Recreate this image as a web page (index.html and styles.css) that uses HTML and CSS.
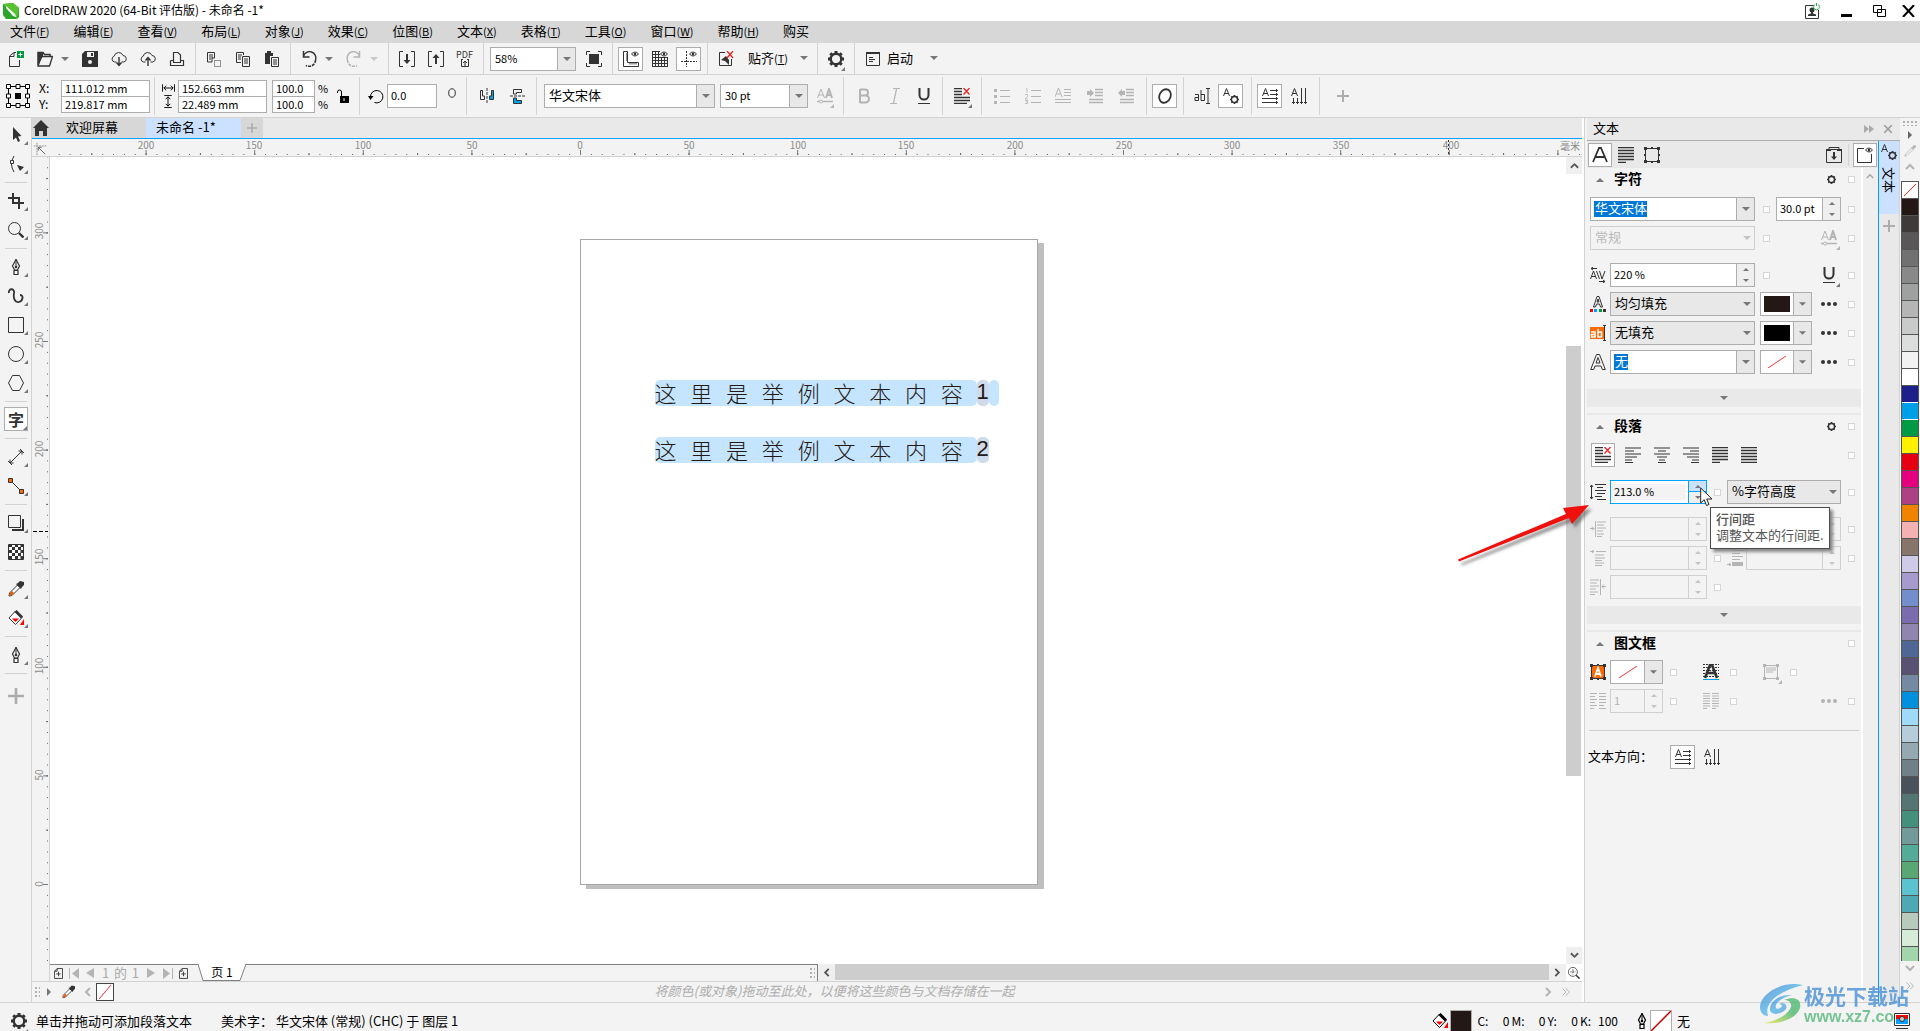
FILE: index.html
```html
<!DOCTYPE html>
<html lang="zh-CN">
<head>
<meta charset="utf-8">
<title>CorelDRAW 2020 (64-Bit 评估版) - 未命名 -1*</title>
<link rel="stylesheet" href="styles.css">
</head>
<body>
<svg class="defs" aria-hidden="true">
  <symbol id="i-down" viewBox="0 0 8 4"><path d="M0 0h8L4 4z" fill="currentColor"/></symbol>
  <symbol id="i-up" viewBox="0 0 8 4"><path d="M0 4h8L4 0z" fill="currentColor"/></symbol>
  <symbol id="i-gear" viewBox="0 0 16 16"><circle cx="8" cy="8" r="5.300" fill="none" stroke="currentColor" stroke-width="2.400"/><path d="M8 0v3M8 13v3M0 8h3M13 8h3M2.300 2.300l2 2M11.700 11.700l2 2M13.700 2.300l-2 2M4.300 11.700l-2 2" stroke="currentColor" stroke-width="3"/></symbol>
  <symbol id="i-new" viewBox="0 0 16 16"><path d="M8 1.500H6L1.500 5v10.500h10V9" fill="none" stroke="currentColor"/><path d="M6 2v3.500H2" fill="none" stroke="currentColor"/><path d="M9 0h7v7H9z" fill="#009a3d"/><path d="M12.500 1.500v4M10.500 3.500h4" stroke="#fff"/></symbol>
  <symbol id="i-open" viewBox="0 0 16 16"><path d="M1 14V1.500h5l1.500 2H13V6" fill="none" stroke="currentColor" stroke-width="1.500"/><path d="M1 15L4 5.500h11.500L12.500 15z" fill="none" stroke="currentColor" stroke-width="1.300"/><path d="M1 2h5v3l-4 8H1z" fill="currentColor"/></symbol>
  <symbol id="i-save" viewBox="0 0 16 16"><path d="M3 0h13v16H0V3z" fill="currentColor"/><path d="M5 1h7v5H5z" fill="#f3f3f3"/><path d="M9 2h2v3H9z" fill="currentColor"/><circle cx="8" cy="11" r="2" fill="#f3f3f3"/></symbol>
  <symbol id="i-clouddn" viewBox="0 0 16 16"><path d="M5.500 11H3.500a3 3 0 0 1-.3-5.800A4.600 4.600 0 0 1 12 4.500a3.300 3.300 0 0 1 .8 6.500h-2.300" fill="none" stroke="currentColor"/><path d="M8 6v8M5.500 11.500L8 14.500l2.500-3" fill="none" stroke="currentColor" stroke-width="1.400"/></symbol>
  <symbol id="i-cloudup" viewBox="0 0 16 16"><path d="M5.500 11H3.500a3 3 0 0 1-.3-5.800A4.600 4.600 0 0 1 12 4.500a3.300 3.300 0 0 1 .8 6.500h-2.300" fill="none" stroke="currentColor"/><path d="M8 15V7M5.500 9.500L8 6.500l2.500 3" fill="none" stroke="currentColor" stroke-width="1.400"/></symbol>
  <symbol id="i-print" viewBox="0 0 16 16"><path d="M4.500 11V1.500H9L11.500 4v7M1.500 9.500v5h13v-5h-3" fill="none" stroke="currentColor" stroke-width="1.200"/><path d="M4.500 9.500h-3M4 11.500h8" stroke="currentColor"/></symbol>
  <symbol id="i-cut" viewBox="0 0 16 16"><path d="M1.500 11V1.500h7V7H6v4z" fill="none" stroke="currentColor"/><path d="M3 4h4M3 6h4M3 8h2" stroke="currentColor"/><path d="M8.500 9.500h6v6h-6z" fill="none" stroke="currentColor" stroke-dasharray="1 1"/></symbol>
  <symbol id="i-copy" viewBox="0 0 16 16"><path d="M6 11.500H1.500v-10h7V4M7.500 5.500h7v10h-7z" fill="none" stroke="currentColor"/><path d="M3 4h4M3 6h3M3 8h3M9 8h4M9 10h4M9 12h4" stroke="currentColor"/></symbol>
  <symbol id="i-paste" viewBox="0 0 16 16"><path d="M1 2h2V0h4v2h2v3H6v8H1z" fill="currentColor"/><path d="M7.500 6.500h7v9h-7z" fill="none" stroke="currentColor"/><path d="M9 9h4M9 11h4M9 13h4" stroke="currentColor"/></symbol>
  <symbol id="i-undo" viewBox="0 0 16 16"><path d="M2.500 5A6.300 6.300 0 0 1 14.500 9" fill="none" stroke="currentColor" stroke-width="1.400"/><path d="M14.500 9A6.300 6.300 0 0 1 5 14.500" fill="none" stroke="currentColor" stroke-width="1.600" stroke-dasharray="3 1"/><path d="M2.500 0v6h6" fill="none" stroke="currentColor" stroke-width="1.500"/></symbol>
  <symbol id="i-redo" viewBox="0 0 16 16"><path d="M13.500 5A6.300 6.300 0 0 0 1.500 9" fill="none" stroke="currentColor" stroke-width="1.400"/><path d="M1.500 9A6.300 6.300 0 0 0 11 14.500" fill="none" stroke="currentColor" stroke-width="1.600" stroke-dasharray="3 1"/><path d="M13.500 0v6h-6" fill="none" stroke="currentColor" stroke-width="1.500"/></symbol>
  <symbol id="i-import" viewBox="0 0 16 16"><path d="M4 .5H.5v15H4M12 .5h3.500v15H12" fill="none" stroke="currentColor"/><path d="M8 3v9" stroke="currentColor" stroke-width="2"/><path d="M4.500 9h7L8 13z" fill="currentColor"/></symbol>
  <symbol id="i-export" viewBox="0 0 16 16"><path d="M4 .5H.5v15H4M12 .5h3.500v15H12" fill="none" stroke="currentColor"/><path d="M8 4v9" stroke="currentColor" stroke-width="2"/><path d="M4.500 7h7L8 3z" fill="currentColor"/></symbol>
  <symbol id="i-page-up" viewBox="0 0 8 8"><path d="M0 .5h2M6 .5h2M.5 0v7.500h7V0" fill="none" stroke="currentColor"/><path d="M4 2v5M2 4l2-2 2 2" fill="none" stroke="currentColor"/></symbol>
  <symbol id="i-full" viewBox="0 0 16 16"><path d="M3 3h10v10H3z" fill="currentColor"/><path d="M.5 4V.5H4M12 .5h3.500V4M15.500 12v3.500H12M4 15.500H.5V12" fill="none" stroke="currentColor"/></symbol>
  <symbol id="i-eye" viewBox="0 0 8 6"><path d="M.5 3Q4-1 7.500 3 4 7 .5 3z" fill="#fff" stroke="currentColor"/><circle cx="4" cy="3" r="1.300" fill="currentColor"/></symbol>
  <symbol id="i-rulers" viewBox="0 0 16 16"><path d="M.5.500h4v11h11v4H.5z" fill="none" stroke="currentColor"/><path d="M3 3h1M3 5h1M3 7h1M3 9h1M7 12v1.500M9 12v1.500M11 12v1.500M13 12v1.500" stroke="currentColor"/><use href="#i-eye" x="8" y="0" width="8" height="6"/></symbol>
  <symbol id="i-grid" viewBox="0 0 16 16"><path d="M0 .5h8M0 3.500h8M0 6.500h16M0 9.500h16M0 12.500h16M0 15.500h16M.5 0v16M3.500 0v16M6.500 0v16M9.500 7v9M12.500 7v9M15.500 7v9" stroke="currentColor" fill="none"/><use href="#i-eye" x="8" y="0" width="8" height="6"/></symbol>
  <symbol id="i-guides" viewBox="0 0 16 16"><path d="M5.500 0v16M0 10.500h16" stroke="currentColor" stroke-dasharray="2 1"/><use href="#i-eye" x="8" y="0" width="8" height="6"/></symbol>
  <symbol id="i-snap" viewBox="0 0 16 16"><path d="M7 1.500H1.500v13h12V8" fill="none" stroke="currentColor"/><path d="M8 5L3 9l4 1 4 4V9" fill="currentColor"/><path d="M9 0l6 7M15 0L9 7" stroke="#f02020" stroke-width="1.300"/></symbol>
  <symbol id="i-launch" viewBox="0 0 16 16"><path d="M1.500 1.500h13v13h-13z" fill="none" stroke="currentColor"/><path d="M1 2h14" stroke="currentColor" stroke-width="2"/><path d="M4 6.500h4M4 8.500h6M4 10.500h4" stroke="currentColor"/></symbol>
  <symbol id="i-anchor" viewBox="0 0 24 24"><path d="M2.500 2.500h19v19h-19z" fill="none" stroke="#000"/><g fill="#fff" stroke="#000"><path d="M.5.500h4v4h-4zM10 .5h4v4h-4zM19.500.500h4v4h-4zM.5 10h4v4h-4zM19.500 10h4v4h-4zM.5 19.500h4v4h-4zM10 19.500h4v4h-4zM19.500 19.500h4v4h-4z"/></g><path d="M9 9h6v6H9z" fill="#000"/></symbol>
  <symbol id="i-width" viewBox="0 0 14 8"><path d="M.5 0v8M13.500 0v8M2 4h10M4.500 1.500L2 4l2.500 2.500M9.500 1.500L12 4 9.500 6.500" fill="none" stroke="currentColor"/></symbol>
  <symbol id="i-height" viewBox="0 0 8 14"><path d="M0 .5h8M0 13.500h8M4 2v10M1.500 4.500L4 2l2.500 2.500M1.500 9.500L4 12l2.500-2.500" fill="none" stroke="currentColor"/></symbol>
  <symbol id="i-lock" viewBox="0 0 12 14"><path d="M3 14H12V7H3z" fill="#000"/><path d="M4.500 7V3a2 2 0 0 0-4 0v1" fill="none" stroke="#000"/><path d="M7 9v3" stroke="#fff"/></symbol>
  <symbol id="i-rotate" viewBox="0 0 16 16"><path d="M2.500 9A6.200 6.200 0 1 1 6.500 14.500" fill="none" stroke="currentColor"/><path d="M0 8h5.500L2.500 12z" fill="currentColor"/></symbol>
  <symbol id="i-mirh" viewBox="0 0 16 16"><path d="M1.500 2.500v9h4V8h-2V2.500z" fill="none" stroke="currentColor"/><path d="M14.500 2.500v9h-4V8h2V2.500z" fill="#00a0e9" stroke="#333"/><path d="M8 0v16" stroke="currentColor" stroke-dasharray="3 1"/></symbol>
  <symbol id="i-mirv" viewBox="0 0 16 16"><path d="M3.500 6V1.500h8v3h-5V6z" fill="none" stroke="currentColor"/><path d="M3.500 10v5.500h8v-3h-5V10z" fill="#00a0e9" stroke="#333"/><path d="M0 8h16" stroke="currentColor" stroke-dasharray="3 1"/></symbol>
  <symbol id="i-noalign" viewBox="0 0 16 16"><path d="M0 .5h8M0 3.500h8M0 6.500h8M0 9.500h16M0 12.500h16M0 15.500h13" stroke="currentColor" stroke-width="1.400"/><path d="M9.500 0l6 6.500M15.500 0l-6 6.500" stroke="#f02020" stroke-width="1.300"/></symbol>
  <symbol id="i-left" viewBox="0 0 16 16"><path d="M0 1h16M0 4h9M0 7h16M0 10h12M0 13h7M0 15.500h8" stroke="currentColor" stroke-width="1.200"/></symbol>
  <symbol id="i-center" viewBox="0 0 16 16"><path d="M0 1h16M4 4h8M0 7h16M3 10h10M5 13h6M4 15.500h8" stroke="currentColor" stroke-width="1.200"/></symbol>
  <symbol id="i-right" viewBox="0 0 16 16"><path d="M0 1h16M7 4h9M0 7h16M4 10h12M9 13h7M8 15.500h8" stroke="currentColor" stroke-width="1.200"/></symbol>
  <symbol id="i-just" viewBox="0 0 16 16"><path d="M0 .5h16M0 3.500h16M0 6.500h16M0 9.500h16M0 12.500h16M0 15.500h8" stroke="currentColor" stroke-width="1.300"/></symbol>
  <symbol id="i-full-just" viewBox="0 0 16 16"><path d="M0 .5h16M0 3.500h16M0 6.500h16M0 9.500h16M0 12.500h16M0 15.500h16" stroke="currentColor" stroke-width="1.300"/></symbol>
  <symbol id="i-bullets" viewBox="0 0 16 16"><path d="M0 1h3v3H0zM0 7h3v3H0zM0 13h3v3H0z" fill="currentColor"/><path d="M6 2.500h10M6 8.500h10M6 14.500h10" stroke="currentColor"/></symbol>
  <symbol id="i-numbers" viewBox="0 0 16 16"><path d="M1 1l1-.5V5M0 6.500h2.500v2L0 11h3M0 12.500h2.500v3H0M1 14h1" stroke="currentColor" fill="none" stroke-width=".8"/><path d="M6 2.500h10M6 8.500h10M6 14.500h10" stroke="currentColor"/></symbol>
  <symbol id="i-dropcap" viewBox="0 0 16 16"><path d="M0 9L3.500 0 7 9M1.500 6h4M9 1.500h7M9 4.500h7M9 7.500h7M0 11.500h16M0 14.500h16" fill="none" stroke="currentColor"/></symbol>
  <symbol id="i-outdent" viewBox="0 0 16 16"><path d="M8 1.500h8M8 4.500h8M8 7.500h8M2 11.500h14M2 14.500h14" stroke="currentColor" stroke-width="1.300"/><path d="M0 3h3V1l4 4-4 4V7H0z" fill="currentColor"/></symbol>
  <symbol id="i-indent" viewBox="0 0 16 16"><path d="M8 1.500h8M8 4.500h8M8 7.500h8M2 11.500h14M2 14.500h14" stroke="currentColor" stroke-width="1.300"/><path d="M7 3H4V1L0 5l4 4V7h3z" fill="currentColor"/></symbol>
  <symbol id="i-aa" viewBox="0 0 16 16"><path d="M.5 10L4 1l3.500 9M2 7h4" fill="none" stroke="currentColor"/><path d="M9 10l3-9 3 9M10 7h4" fill="none" stroke="currentColor" stroke-width="2"/><path d="M0 13.500h16" stroke="currentColor" stroke-width="1.500"/><circle cx="4" cy="13.500" r="1.500" fill="#f3f3f3" stroke="currentColor"/></symbol>
  <symbol id="i-bold" viewBox="0 0 16 16"><path d="M4 1v14M4 1.500h5a3 3 0 0 1 0 6H4M4 7.500h5.500a3.500 3.500 0 0 1 0 7H4" fill="none" stroke="currentColor" stroke-width="2"/></symbol>
  <symbol id="i-italic" viewBox="0 0 16 16"><path d="M6 .5h7M3 15.500h7M9.500 1l-3 14" fill="none" stroke="currentColor" stroke-width="1.200"/></symbol>
  <symbol id="i-under" viewBox="0 0 16 16"><path d="M3.500 0v7a4.500 4.500 0 0 0 9 0V0" fill="none" stroke="currentColor" stroke-width="2"/><path d="M2 15.500h12" stroke="currentColor"/></symbol>
  <symbol id="i-opentype" viewBox="0 0 16 16"><ellipse cx="8" cy="8" rx="5.500" ry="7" transform="rotate(25 8 8)" fill="none" stroke="currentColor" stroke-width="1.800"/></symbol>
  <symbol id="i-ab" viewBox="0 0 16 16"><path d="M1 6.500h3.500v6H1v-3h3.500M7 2v10.500h3.500v-6H7" fill="none" stroke="currentColor"/><path d="M12 .5h4M12 15.500h4M14 1v14" stroke="currentColor"/></symbol>
  <symbol id="i-agear" viewBox="0 0 16 16"><path d="M.5 8L3.500.500 6.500 8M1.500 5.500h4" fill="none" stroke="currentColor"/><use href="#i-gear" x="7" y="7" width="9" height="9"/></symbol>
  <symbol id="i-horz" viewBox="0 0 16 16"><path d="M.5 8L3.500.500 6.500 8M1.500 5.500h4" fill="none" stroke="currentColor"/><path d="M8 2.500h8M8 6.500h8M0 10.500h16M0 14.500h16M14.500 1v3M14.500 5v3M14.500 9v3M14.500 13v3" stroke="currentColor"/></symbol>
  <symbol id="i-vert" viewBox="0 0 16 16"><path d="M.5 8L3.500.500 6.500 8M1.500 5.500h4" fill="none" stroke="currentColor"/><path d="M2.500 10v6M6.500 10v6M10.500 0v16M14.500 0v16M1 14.500h3M5 14.500h3M9 14.500h3M13 14.500h3" stroke="currentColor"/></symbol>
  <symbol id="i-home" viewBox="0 0 16 16"><path d="M8 0L0 8h2v8h4v-5h4v5h4V8h2z" fill="currentColor"/></symbol>
  <symbol id="i-plus" viewBox="0 0 12 12"><path d="M6 0v12M0 6h12" stroke="currentColor" stroke-width="2"/></symbol>
  <symbol id="i-pick" viewBox="0 0 16 16"><path d="M5 0v13l3-2.500L10 15l2-1-2-4.500 3.500-.5z" fill="currentColor"/></symbol>
  <symbol id="i-shape" viewBox="0 0 16 16"><path d="M6 0Q1 8 6 16" fill="none" stroke="currentColor"/><path d="M2.500 4.500h3v3h-3z" fill="#fff" stroke="currentColor"/><path d="M9 9l7 2-4 4z" fill="currentColor"/></symbol>
  <symbol id="i-crop" viewBox="0 0 16 16"><path d="M0 5h11v11M5 0v10h11" fill="none" stroke="currentColor" stroke-width="2"/></symbol>
  <symbol id="i-zoom" viewBox="0 0 16 16"><circle cx="6.500" cy="6.500" r="6" fill="none" stroke="currentColor"/><path d="M11 11l4.500 4.500" stroke="currentColor" stroke-width="2.400"/></symbol>
  <symbol id="i-pen" viewBox="0 0 16 16"><path d="M8 .5L4.500 7l2 4h3l2-4zM6 11.500h4v4H6z" fill="none" stroke="currentColor" stroke-width="1.200"/><path d="M8 0v9" stroke="currentColor"/><circle cx="8" cy="8" r="1.300" fill="currentColor"/></symbol>
  <symbol id="i-curve" viewBox="0 0 16 16"><path d="M1 5C0 0 7 0 6 5 5 10 7 15 11 14c4-1 5-7 1-7" fill="none" stroke="currentColor" stroke-width="1.800"/></symbol>
  <symbol id="i-rect" viewBox="0 0 16 16"><path d="M.5.500h15v15H.5z" fill="none" stroke="currentColor"/></symbol>
  <symbol id="i-ellipse" viewBox="0 0 16 16"><circle cx="8" cy="8" r="7.500" fill="none" stroke="currentColor"/></symbol>
  <symbol id="i-poly" viewBox="0 0 16 16"><path d="M4.500.500h7l4 7.500-4 7.500h-7L.5 8z" fill="none" stroke="currentColor"/></symbol>
  <symbol id="i-dim" viewBox="0 0 16 16"><path d="M2 14L14 2M0 12l4 4M12 0l4 4M2 10.500V14h3.500M10.500 2H14v3.500" fill="none" stroke="currentColor"/></symbol>
  <symbol id="i-conn" viewBox="0 0 16 16"><path d="M4 4l8 8" stroke="currentColor"/><path d="M.5.500h4v4h-4zM11.500 11.500h4v4h-4z" fill="#ff6a00" stroke="currentColor"/></symbol>
  <symbol id="i-shadow" viewBox="0 0 16 16"><path d="M.5.500h12v12H.5z" fill="none" stroke="currentColor"/><path d="M15 4v11H4" fill="none" stroke="currentColor" stroke-width="2"/></symbol>
  <symbol id="i-check" viewBox="0 0 16 16"><path d="M.5.500h15v15H.5z" fill="#fff" stroke="currentColor"/><path d="M2.500 0v16M8.500 0v16M14 0v16" stroke="currentColor" stroke-width="3" stroke-dasharray="3 3"/><path d="M5.500 0v16M11.500 0v16" stroke="currentColor" stroke-width="3" stroke-dasharray="3 3" stroke-dashoffset="3"/></symbol>
  <symbol id="i-drop" viewBox="0 0 16 16"><path d="M9.500 4L1.500 12l-.5 3 3-.5 8-8z" fill="#fff" stroke="currentColor"/><path d="M1 15l1-3 2-2 2 2-2 2z" fill="#e86000"/><path d="M8 3l2-1 2-2 4 1v3l-2 2-1 2z" fill="currentColor"/></symbol>
  <symbol id="i-bucket" viewBox="0 0 16 16"><path d="M7.500 1L14 7.500 7.500 14.500 1 8z" fill="#fff" stroke="currentColor"/><path d="M7.500 1L14 7.500" stroke="currentColor" stroke-width="3"/><path d="M4 8.500h7L7.500 12z" fill="#f00"/><path d="M16 9v6h-4z" fill="#f00"/></symbol>
  <symbol id="i-corner" viewBox="0 0 16 16"><path d="M4.500 1v15M1 4.500h15" stroke="#888" stroke-dasharray="2 1"/><path d="M6 6l8 8M6 10V6h4" fill="none" stroke="#555"/></symbol>
  <symbol id="i-frame" viewBox="0 0 16 16"><path d="M1.500 1.500h13v13h-13z" fill="none" stroke="currentColor"/><path d="M0 0h3v3H0zM13 0h3v3h-3zM0 13h3v3H0zM13 13h3v3h-3zM7 0h2v2H7zM7 14h2v2H7zM0 7h2v2H0zM14 7h2v2h-2z" fill="currentColor"/></symbol>
  <symbol id="i-kern" viewBox="0 0 16 16"><path d="M.5 12L3.500 4l3 8M1.500 9.500h4M6.500 4l3 8M9.500 4l2.500 8 3-8" fill="none" stroke="currentColor"/><path d="M1 1.500h6M3 0L1 1.500 3 3M9 14.500h6M13 13l2 1.500-2 1.500" fill="none" stroke="currentColor"/></symbol>
  <symbol id="i-fillA" viewBox="0 0 16 16"><path d="M3.500 11L7 .5h2L12.500 11h-2L9.500 8h-3L5.500 11zM7 6h2L8 3z" fill="none" stroke="currentColor"/><path d="M0 13h3v3H0z" fill="#f00"/><path d="M4 13h3v3H4z" fill="#00a0ff"/><path d="M9 13h3v3H9z" fill="#009a3d"/><path d="M13 13h3v3h-3z" fill="#333"/></symbol>
  <symbol id="i-bgfill" viewBox="0 0 16 16"><path d="M0 2h14v12H0z" fill="#ff6a00"/><path d="M1 7h4v5H1.500V9.500H5M8 4v8h3.500V7H8" fill="none" stroke="#fff" stroke-width="1.500"/><path d="M14.500 0v16M13 .5h3M13 15.500h3" stroke="#333"/></symbol>
  <symbol id="i-outA" viewBox="0 0 16 16"><path d="M.7 15.500L6.500.500h3l5.800 15h-3L11 12H5l-1.300 3.500zM6 9h4L8 3.500z" fill="none" stroke="currentColor"/></symbol>
  <symbol id="i-line" viewBox="0 0 16 16"><path d="M1.500 1v14M0 3l1.500-2L3 3M0 13l1.500 2L3 13M5 .5h11M7 3.500h6M5 6.500h11M7 9.500h8M5 12.500h7M7 15.500h9" fill="none" stroke="currentColor"/></symbol>
  <symbol id="i-lind" viewBox="0 0 16 16"><path d="M5.500 0v16M0 7.500h4M2 5.500l2 2-2 2M7 1h9M7 4h7M7 7h9M7 10h6M7 13h7M7 15.500h5" fill="none" stroke="currentColor"/></symbol>
  <symbol id="i-find" viewBox="0 0 16 16"><path d="M0 1.500h4M2 0l2 1.500L2 3M6 1.500h10M5 5h9M5 8h10M5 10.500h7M5 13h9M5 15.500h7" fill="none" stroke="currentColor"/></symbol>
  <symbol id="i-rind" viewBox="0 0 16 16"><path d="M10.500 0v16M16 7.500h-4M14 5.500l-2 2 2 2M0 1h9M0 4h7M0 7h9M0 10h6M0 13h8M0 15.500h5" fill="none" stroke="currentColor"/></symbol>
  <symbol id="i-after" viewBox="0 0 16 16"><path d="M5 .5h11M5 3.500h8M5 6.500h11M5 9.500h8M0 14.500h4M2 13l2 1.500L2 16" fill="none" stroke="currentColor"/><path d="M5 12h11v4H5z" fill="currentColor"/></symbol>
  <symbol id="i-frameA" viewBox="0 0 16 16"><path d="M1.500 1.500h13v13h-13z" fill="#ff6a00" stroke="#333"/><path d="M0 0h3v3H0zM13 0h3v3h-3zM0 13h3v3H0zM13 13h3v3h-3zM7 0h2v2H7zM7 14h2v2H7z" fill="#333"/><path d="M5 12.500L8 4l3 8.500M6 10h4" fill="none" stroke="#fff" stroke-width="1.800"/></symbol>
  <symbol id="i-base" viewBox="0 0 16 16"><path d="M0 .5h16M0 3.500h16M0 6.500h16M0 9.500h16M0 12.500h16" stroke="currentColor" stroke-dasharray="2 1"/><path d="M2 14L7 1h2l5 13M5 9h6" fill="none" stroke="#333" stroke-width="2.600"/><path d="M0 15.500h16" stroke="#00a0e9"/></symbol>
  <symbol id="i-valign" viewBox="0 0 16 16"><path d="M1.500 1.500h13v13h-13zM3 4h10M3 6h10M3 8h7" fill="none" stroke="currentColor"/><path d="M0 0h3v3H0zM13 0h3v3h-3zM0 13h3v3H0zM13 13h3v3h-3z" fill="currentColor"/></symbol>
  <symbol id="i-cols" viewBox="0 0 16 16"><path d="M0 .5h7M0 3.500h5M0 6.500h7M0 9.500h5M0 12.500h7M0 15.500h4M9 .5h7M9 3.500h7M9 6.500h7M9 9.500h7M9 12.500h5M9 15.500h7" stroke="currentColor"/></symbol>
  <symbol id="i-cols2" viewBox="0 0 16 16"><path d="M0 .5h7M0 3h7M0 5.500h7M0 8h7M0 10.500h7M0 13h7M0 15.500h4M9 .5h7M9 3h7M9 5.500h7M9 8h7M9 10.500h7M9 13h7M9 15.500h4" stroke="currentColor"/></symbol>
  <symbol id="i-dots" viewBox="0 0 16 4"><circle cx="2" cy="2" r="2" fill="currentColor"/><circle cx="8" cy="2" r="2" fill="currentColor"/><circle cx="14" cy="2" r="2" fill="currentColor"/></symbol>
  <symbol id="i-none" viewBox="0 0 18 12"><path d="M0 12L18 0" stroke="#f03030"/></symbol>
  <symbol id="i-addpage" viewBox="0 0 10 12"><path d="M3.500.500h6v11h-9v-8zM5 4v5M2.500 6.500h5M3.500.500v3h-3" fill="none" stroke="currentColor"/></symbol>
  <symbol id="i-chev-up" viewBox="0 0 10 7"><path d="M1 6l4-4 4 4" fill="none" stroke="currentColor" stroke-width="2"/></symbol>
  <symbol id="i-chev-dn" viewBox="0 0 10 7"><path d="M1 1l4 4 4-4" fill="none" stroke="currentColor" stroke-width="2"/></symbol>
  <symbol id="i-chev-l" viewBox="0 0 7 10"><path d="M6 1L2 5l4 4" fill="none" stroke="currentColor" stroke-width="2"/></symbol>
  <symbol id="i-chev-r" viewBox="0 0 7 10"><path d="M1 1l4 4-4 4" fill="none" stroke="currentColor" stroke-width="2"/></symbol>
  <symbol id="i-dbl" viewBox="0 0 8 8"><path d="M.5.500L4 4 .5 7.500M4 .5L7.500 4 4 7.500" fill="none" stroke="currentColor"/></symbol>
  <symbol id="i-tri-r" viewBox="0 0 4 8"><path d="M0 0l4 4-4 4z" fill="currentColor"/></symbol>
</svg>

<header class="titlebar">
  <svg class="logo" viewBox="0 0 16 16"><path d="M0 1l10-1 6 5v9l-2 2H3l-3-4z" fill="#2aa52a"/><path d="M0 1l10-1 6 5-2 11z" fill="#57c22f"/><path d="M3 3l9 8 1 3-3-1L3 5z" fill="#fff"/></svg>
  <h1>CorelDRAW 2020 (64-Bit 评估版) - 未命名 -1*</h1>
  <div class="winbtns">
    <button aria-label="账户"><svg width="15" height="16" viewBox="0 0 15 16"><path d="M9 2.500H.5v13h13V7" fill="none" stroke="#333"/><circle cx="7" cy="7" r="2.500" fill="#333"/><path d="M3 13v-1.500l3-1V9h2v1.500l3 1V13z" fill="#333"/><path d="M9.500 1.500a3 3 0 1 0 4 0M11.500 0v3" fill="none" stroke="#2bb24c"/></svg></button>
    <button aria-label="最小化"><svg width="11" height="12" viewBox="0 0 11 12"><path d="M0 10.500h11" stroke="#000" stroke-width="3"/></svg></button>
    <button aria-label="还原"><svg width="13" height="12" viewBox="0 0 13 12"><path d="M.5.500h8v7h-8zM4.500 4.500h8v7h-8z" fill="#fff" stroke="#000"/></svg></button>
    <button class="close" aria-label="关闭"><svg width="13" height="12" viewBox="0 0 13 12"><path d="M1 0l11 12M12 0L1 12" stroke="#000" stroke-width="2"/></svg></button>
  </div>
</header>

<nav class="menubar">
  <button>文件<span>(<u>F</u>)</span></button><button>编辑<span>(<u>E</u>)</span></button><button>查看<span>(<u>V</u>)</span></button><button>布局<span>(<u>L</u>)</span></button><button>对象<span>(<u>J</u>)</span></button><button>效果<span>(<u>C</u>)</span></button><button>位图<span>(<u>B</u>)</span></button><button>文本<span>(<u>X</u>)</span></button><button>表格<span>(<u>T</u>)</span></button><button>工具<span>(<u>O</u>)</span></button><button>窗口<span>(<u>W</u>)</span></button><button>帮助<span>(<u>H</u>)</span></button><button>购买</button>
</nav>

<div class="toolbar std" role="toolbar">
  <button class="ib" aria-label="新建"><svg><use href="#i-new"/></svg></button>
  <button class="ib" aria-label="打开"><svg><use href="#i-open"/></svg></button>
  <button class="drop" aria-label="打开选项"><svg><use href="#i-down"/></svg></button>
  <button class="ib" aria-label="保存"><svg><use href="#i-save"/></svg></button>
  <button class="ib" aria-label="云下载"><svg><use href="#i-clouddn"/></svg></button>
  <button class="ib" aria-label="云上传"><svg><use href="#i-cloudup"/></svg></button>
  <button class="ib" aria-label="打印"><svg><use href="#i-print"/></svg></button>
  <i class="sep"></i>
  <button class="ib" aria-label="剪切"><svg><use href="#i-cut"/></svg></button>
  <button class="ib" aria-label="复制"><svg><use href="#i-copy"/></svg></button>
  <button class="ib" aria-label="粘贴"><svg><use href="#i-paste"/></svg></button>
  <i class="sep"></i>
  <button class="ib" aria-label="撤消"><svg><use href="#i-undo"/></svg></button>
  <button class="drop" aria-label="撤消列表"><svg><use href="#i-down"/></svg></button>
  <button class="ib off" aria-label="重做"><svg><use href="#i-redo"/></svg></button>
  <button class="drop off" aria-label="重做列表"><svg><use href="#i-down"/></svg></button>
  <i class="sep"></i>
  <button class="ib" aria-label="导入"><svg><use href="#i-import"/></svg></button>
  <button class="ib" aria-label="导出"><svg><use href="#i-export"/></svg></button>
  <button class="ib pdf">PDF<svg><use href="#i-page-up"/></svg></button>
  <i class="sep"></i>
  <div class="combo zoomlevel"><input type="text" value="58%" aria-label="缩放级别"><button aria-label="展开"><svg><use href="#i-down"/></svg></button></div>
  <button class="ib" aria-label="全屏预览"><svg><use href="#i-full"/></svg></button>
  <i class="sep"></i>
  <button class="ib on" aria-label="标尺"><svg><use href="#i-rulers"/></svg></button>
  <button class="ib" aria-label="网格"><svg><use href="#i-grid"/></svg></button>
  <button class="ib on" aria-label="辅助线"><svg><use href="#i-guides"/></svg></button>
  <i class="sep"></i>
  <button class="ib" aria-label="关闭贴齐"><svg><use href="#i-snap"/></svg></button>
  <button class="txt snap">贴齐<span>(<u>T</u>)</span><svg><use href="#i-down"/></svg></button>
  <i class="sep"></i>
  <button class="ib more" aria-label="选项"><svg><use href="#i-gear"/></svg></button>
  <i class="sep"></i>
  <button class="ib" aria-label="启动器"><svg><use href="#i-launch"/></svg></button>
  <button class="txt launch">启动<svg><use href="#i-down"/></svg></button>
</div>

<div class="toolbar prop" role="toolbar">
  <button class="anchor" aria-label="对象原点"><svg><use href="#i-anchor"/></svg></button>
  <div class="pair labels"><label for="px">X:</label><label for="py">Y:</label></div>
  <div class="pair pos"><input id="px" type="text" value="111.012 mm"><input id="py" type="text" value="219.817 mm"></div>
  <i class="sep"></i>
  <div class="pair dims"><svg class="w"><use href="#i-width"/></svg><svg class="h"><use href="#i-height"/></svg></div>
  <div class="pair pos"><input aria-label="宽度" type="text" value="152.663 mm"><input aria-label="高度" type="text" value="22.489 mm"></div>
  <div class="pair scale"><input aria-label="水平缩放" type="text" value="100.0"><input aria-label="垂直缩放" type="text" value="100.0"></div>
  <div class="pair pct"><span>%</span><span>%</span></div>
  <button class="ib lock" aria-label="锁定比率"><svg><use href="#i-lock"/></svg></button>
  <i class="sep"></i>
  <label class="rot" for="rot"><svg><use href="#i-rotate"/></svg></label>
  <input id="rot" class="rotin" type="text" value="0.0">
  <svg class="deg" viewBox="0 0 8 10"><ellipse cx="4" cy="5" rx="3.300" ry="4.200" fill="none" stroke="#333"/></svg>
  <i class="sep"></i>
  <button class="ib wide" aria-label="水平镜像"><svg><use href="#i-mirh"/></svg></button>
  <button class="ib" aria-label="垂直镜像"><svg><use href="#i-mirv"/></svg></button>
  <i class="sep"></i>
  <div class="combo font"><input type="text" value="华文宋体" aria-label="字体"><button aria-label="展开"><svg><use href="#i-down"/></svg></button></div>
  <div class="combo size"><input type="text" value="30 pt" aria-label="字号"><button aria-label="展开"><svg><use href="#i-down"/></svg></button></div>
  <button class="ib off more" aria-label="可变字体"><svg><use href="#i-aa"/></svg></button>
  <i class="sep"></i>
  <button class="ib off wide" aria-label="粗体"><svg><use href="#i-bold"/></svg></button>
  <button class="ib off" aria-label="斜体"><svg><use href="#i-italic"/></svg></button>
  <button class="ib" aria-label="下划线"><svg><use href="#i-under"/></svg></button>
  <i class="sep"></i>
  <button class="ib more mid" aria-label="文本对齐"><svg><use href="#i-noalign"/></svg></button>
  <i class="sep"></i>
  <button class="ib off wide" aria-label="项目符号"><svg><use href="#i-bullets"/></svg></button>
  <button class="ib off" aria-label="编号列表"><svg><use href="#i-numbers"/></svg></button>
  <button class="ib off mid" aria-label="首字下沉"><svg><use href="#i-dropcap"/></svg></button>
  <button class="ib off wide" aria-label="减少缩进"><svg><use href="#i-outdent"/></svg></button>
  <button class="ib off" aria-label="增加缩进"><svg><use href="#i-indent"/></svg></button>
  <i class="sep far"></i>
  <button class="ib on" aria-label="OpenType"><svg><use href="#i-opentype"/></svg></button>
  <i class="sep"></i>
  <button class="ib" aria-label="编辑文本"><svg><use href="#i-ab"/></svg></button>
  <button class="ib on" aria-label="文本泊坞窗"><svg><use href="#i-agear"/></svg></button>
  <i class="sep far"></i>
  <button class="ib on" aria-label="横排"><svg><use href="#i-horz"/></svg></button>
  <button class="ib" aria-label="竖排"><svg><use href="#i-vert"/></svg></button>
  <i class="sep far"></i>
  <button class="ib add custom" aria-label="自定义"><svg><use href="#i-plus"/></svg></button>
</div>

<main>
  <div class="toolbox" role="toolbar">
    <button class="tb more" aria-label="选择"><svg><use href="#i-pick"/></svg></button>
    <button class="tb more" aria-label="形状"><svg><use href="#i-shape"/></svg></button>
    <hr>
    <button class="tb more" aria-label="裁剪"><svg><use href="#i-crop"/></svg></button>
    <button class="tb more" aria-label="缩放"><svg><use href="#i-zoom"/></svg></button>
    <hr>
    <button class="tb more" aria-label="钢笔"><svg><use href="#i-pen"/></svg></button>
    <button class="tb more" aria-label="艺术笔"><svg><use href="#i-curve"/></svg></button>
    <button class="tb more" aria-label="矩形"><svg><use href="#i-rect"/></svg></button>
    <button class="tb more" aria-label="椭圆"><svg><use href="#i-ellipse"/></svg></button>
    <button class="tb more" aria-label="多边形"><svg><use href="#i-poly"/></svg></button>
    <hr>
    <button class="tb more on">字</button>
    <hr>
    <button class="tb more" aria-label="度量"><svg><use href="#i-dim"/></svg></button>
    <button class="tb more" aria-label="连接器"><svg><use href="#i-conn"/></svg></button>
    <hr>
    <button class="tb more" aria-label="阴影"><svg><use href="#i-shadow"/></svg></button>
    <button class="tb" aria-label="透明度"><svg><use href="#i-check"/></svg></button>
    <hr>
    <button class="tb more" aria-label="滴管"><svg><use href="#i-drop"/></svg></button>
    <button class="tb more" aria-label="填充"><svg><use href="#i-bucket"/></svg></button>
    <hr>
    <button class="tb more" aria-label="轮廓"><svg><use href="#i-pen"/></svg></button>
    <hr>
    <button class="tb add" aria-label="自定义"><svg><use href="#i-plus"/></svg></button>
  </div>

  <section class="doc">
    <div class="tabs">
      <button class="home"><svg><use href="#i-home"/></svg>欢迎屏幕</button>
      <button class="active">未命名 -1*</button>
      <button class="newtab" aria-label="新建"><svg><use href="#i-plus"/></svg></button>
    </div>
    <div class="hruler">
      <svg width="100%" height="18">
        <defs>
          <pattern id="hminor" x="548" width="10.860" height="18" patternUnits="userSpaceOnUse"><rect y="15" width="1" height="1" fill="#666"/></pattern>
          <pattern id="hmid" x="548" width="54.300" height="18" patternUnits="userSpaceOnUse"><rect y="14" width="1" height="2" fill="#666"/></pattern>
          <pattern id="hmajor" x="548" width="108.600" height="18" patternUnits="userSpaceOnUse"><rect y="11" width="1" height="5" fill="#777"/></pattern>
        </defs>
        <rect x="22" width="100%" height="18" fill="url(#hminor)"/><rect x="22" width="100%" height="18" fill="url(#hmid)"/><rect x="22" width="100%" height="18" fill="url(#hmajor)"/>
        <use href="#i-corner" x="1" y="3" width="14" height="14"/>
        <g text-anchor="middle"><text x="114" y="10">200</text><text x="222" y="10">150</text><text x="331" y="10">100</text><text x="440" y="10">50</text><text x="548" y="10">0</text><text x="657" y="10">50</text><text x="766" y="10">100</text><text x="874" y="10">150</text><text x="983" y="10">200</text><text x="1092" y="10">250</text><text x="1200" y="10">300</text><text x="1309" y="10">350</text><text x="1419" y="10">400</text></g>
        <path d="M1416.500 1v14" stroke="#333" stroke-dasharray="2 2"/>
      </svg>
      <span>毫米</span>
    </div>
    <div class="work">
      <div class="vruler">
        <svg width="17" height="100%">
          <defs>
            <pattern id="vminor" y="727" width="17" height="10.860" patternUnits="userSpaceOnUse"><rect x="15" width="1" height="1" fill="#666"/></pattern>
            <pattern id="vmid" y="727" width="17" height="54.300" patternUnits="userSpaceOnUse"><rect x="14" width="2" height="1" fill="#666"/></pattern>
            <pattern id="vmajor" y="727" width="17" height="108.600" patternUnits="userSpaceOnUse"><rect x="11" width="5" height="1" fill="#777"/></pattern>
          </defs>
          <rect width="17" height="100%" fill="url(#vminor)"/><rect width="17" height="100%" fill="url(#vmid)"/><rect width="17" height="100%" fill="url(#vmajor)"/>
          <g text-anchor="middle"><text transform="translate(11 74) rotate(-90)">300</text><text transform="translate(11 183) rotate(-90)">250</text><text transform="translate(11 292) rotate(-90)">200</text><text transform="translate(11 400) rotate(-90)">150</text><text transform="translate(11 509) rotate(-90)">100</text><text transform="translate(11 618) rotate(-90)">50</text><text transform="translate(11 727) rotate(-90)">0</text></g>
          <path d="M1 374.500h15" stroke="#000" stroke-dasharray="4 2"/>
        </svg>
      </div>
      <div class="canvas">
        <div class="sheet">
          <p class="art"><span class="cjk"><b>这</b><b>里</b><b>是</b><b>举</b><b>例</b><b>文</b><b>本</b><b>内</b><b>容</b></span><span class="num">1</span><span class="tail"></span></p>
          <p class="art"><span class="cjk"><b>这</b><b>里</b><b>是</b><b>举</b><b>例</b><b>文</b><b>本</b><b>内</b><b>容</b></span><span class="num">2</span></p>
        </div>
      </div>
      <div class="vscroll"><button aria-label="向上"><svg><use href="#i-chev-up"/></svg></button><div class="track"><div class="thumb"></div></div><button aria-label="向下"><svg><use href="#i-chev-dn"/></svg></button></div>
    </div>
    <div class="pagebar">
      <div class="vr-end"></div>
      <div class="pagenav">
        <button aria-label="添加页"><svg width="9" height="11"><use href="#i-addpage"/></svg></button>
        <button class="off" aria-label="首页"><svg width="11" height="11" viewBox="0 0 11 11"><path d="M.5 0v11" stroke="currentColor"/><path d="M10 0v11L3 5.500z" fill="currentColor"/></svg></button>
        <button class="off" aria-label="上一页"><svg width="8" height="10" viewBox="0 0 8 10"><path d="M8 0v10L0 5z" fill="currentColor"/></svg></button>
        <span class="count"><span>1</span><span>的</span><span>1</span></span>
        <button class="off" aria-label="下一页"><svg width="8" height="10" viewBox="0 0 8 10"><path d="M0 0v10l8-5z" fill="currentColor"/></svg></button>
        <button class="off" aria-label="末页"><svg width="11" height="11" viewBox="0 0 11 11"><path d="M10.500 0v11" stroke="currentColor"/><path d="M1 0v11l7-5.500z" fill="currentColor"/></svg></button>
        <button aria-label="添加页"><svg width="9" height="11"><use href="#i-addpage"/></svg></button>
        <button class="pagetab"><svg viewBox="0 0 48 17" preserveAspectRatio="none"><path d="M0 0l5 16.500h37L48 0" fill="#fff" stroke="#808080"/></svg><span>页 1</span></button>
        <i class="grip"></i>
      </div>
      <div class="hscroll"><button aria-label="向左"><svg><use href="#i-chev-l"/></svg></button><div class="thumb"></div><button aria-label="向右"><svg><use href="#i-chev-r"/></svg></button></div>
      <button class="nav" aria-label="导航器"><svg width="12" height="12" viewBox="0 0 16 16"><circle cx="6.500" cy="6.500" r="6" fill="none" stroke="#333"/><path d="M11 11l4.500 4.500" stroke="#333" stroke-width="2"/><path d="M6.500 3v7M3 6.500h7" stroke="#333" stroke-dasharray="2 1"/></svg></button>
    </div>
    <div class="docpal">
      <i class="grip"></i>
      <button aria-label="菜单"><svg width="4" height="8"><use href="#i-tri-r"/></svg></button>
      <button class="pickcol" aria-label="滴管"><svg width="13" height="14"><use href="#i-drop"/></svg></button>
      <button class="off" aria-label="向左"><svg width="7" height="10"><use href="#i-chev-l"/></svg></button>
      <button class="nofill" aria-label="无色"><svg width="12" height="14" viewBox="0 0 12 14"><path d="M0 14L12 0" stroke="#f03030"/></svg></button>
      <em>将颜色(或对象)拖动至此处，以便将这些颜色与文档存储在一起</em>
      <button class="off" aria-label="向右"><svg width="7" height="10"><use href="#i-chev-r"/></svg></button>
      <button class="off" aria-label="更多"><svg width="8" height="8"><use href="#i-dbl"/></svg></button>
    </div>
  </section>

  <aside class="docker">
    <div class="dtitle"><h2>文本</h2>
      <button aria-label="折叠"><svg width="10" height="8" viewBox="0 0 10 8"><path d="M0 0l5 4-5 4zM5 0l5 4-5 4z" fill="#aaa"/></svg></button>
      <button aria-label="关闭"><svg width="8" height="8" viewBox="0 0 8 8"><path d="M0 0l8 8M8 0L0 8" stroke="#999" stroke-width="1.500"/></svg></button>
    </div>
    <div class="dbody">
      <div class="dleft">
        <div class="dtools">
          <button class="ib on" aria-label="字符"><svg viewBox="0 0 16 16"><path d="M1 15L7 1h2l6 14M3.500 10h9" fill="none" stroke="currentColor" stroke-width="1.800"/></svg></button>
          <button class="ib" aria-label="段落"><svg><use href="#i-just"/></svg></button>
          <button class="ib" aria-label="图文框"><svg><use href="#i-frame"/></svg></button>
          <button class="ib last" aria-label="保存样式"><svg viewBox="0 0 16 16"><path d="M3 2.500H.5v13h15v-13H13" fill="none" stroke="currentColor"/><path d="M3 .5h10v2H3z" fill="none" stroke="currentColor"/><path d="M0 3h5M11 3h5M8 5v7" stroke="currentColor" stroke-width="2"/><path d="M5 9.500h6L8 13z" fill="currentColor"/></svg></button>
          <i class="sep"></i>
          <button class="ib on" aria-label="预览"><svg viewBox="0 0 16 16"><path d="M7 1.500H.5v14h14V7" fill="none" stroke="currentColor"/><use href="#i-eye" x="8" y="0" width="8" height="6"/></svg></button>
        </div>
        <div class="dscroll">
          <div class="dform">
            <section class="chars">
              <header><svg class="tri"><use href="#i-up"/></svg><h3>字符</h3><button class="cog" aria-label="选项"><svg><use href="#i-gear"/></svg></button><i class="sq"></i></header>
              <div class="row"><div class="combo full"><input class="picked four" type="text" value="华文宋体" aria-label="字体"><button aria-label="展开"><svg><use href="#i-down"/></svg></button></div><i class="sq"></i><div class="spin pt"><input type="text" value="30.0 pt" aria-label="字号"><span><button aria-label="增加"><svg><use href="#i-up"/></svg></button><button aria-label="减少"><svg><use href="#i-down"/></svg></button></span></div><i class="sq"></i></div>
              <div class="row gap"><div class="sel full off"><select aria-label="字体样式" disabled><option>常规</option></select><svg><use href="#i-down"/></svg></div><i class="sq"></i><button class="ic last off more" aria-label="可变字体"><svg><use href="#i-aa"/></svg></button><i class="sq"></i></div>
              <div class="row"><svg class="lead"><use href="#i-kern"/></svg><div class="spin main"><input type="text" value="220 %" aria-label="字距"><span><button aria-label="增加"><svg><use href="#i-up"/></svg></button><button aria-label="减少"><svg><use href="#i-down"/></svg></button></span></div><i class="sq"></i><button class="ic last more" aria-label="下划线"><svg><use href="#i-under"/></svg></button><i class="sq"></i></div>
              <div class="row"><svg class="lead"><use href="#i-fillA"/></svg><div class="sel main"><select aria-label="填充类型"><option>均匀填充</option></select><svg><use href="#i-down"/></svg></div><button class="swatch" aria-label="填充颜色"><span class="brown"></span><svg><use href="#i-down"/></svg></button><button class="ic last" aria-label="填充设置"><svg class="dots"><use href="#i-dots"/></svg></button><i class="sq"></i></div>
              <div class="row"><svg class="lead"><use href="#i-bgfill"/></svg><div class="sel main"><select aria-label="背景填充"><option>无填充</option></select><svg><use href="#i-down"/></svg></div><button class="swatch" aria-label="背景颜色"><span class="black"></span><svg><use href="#i-down"/></svg></button><button class="ic last" aria-label="背景设置"><svg class="dots"><use href="#i-dots"/></svg></button><i class="sq"></i></div>
              <div class="row"><svg class="lead"><use href="#i-outA"/></svg><div class="combo main"><input class="picked one" type="text" value="无" aria-label="轮廓宽度"><button aria-label="展开"><svg><use href="#i-down"/></svg></button></div><button class="swatch" aria-label="轮廓颜色"><span><svg><use href="#i-none"/></svg></span><svg><use href="#i-down"/></svg></button><button class="ic last" aria-label="轮廓设置"><svg class="dots"><use href="#i-dots"/></svg></button><i class="sq"></i></div>
              <button class="expand first" aria-label="展开"><svg><use href="#i-down"/></svg></button>
            </section>
            <section class="para">
              <header><svg class="tri"><use href="#i-up"/></svg><h3>段落</h3><button class="cog" aria-label="选项"><svg><use href="#i-gear"/></svg></button><i class="sq"></i></header>
              <div class="row aligns"><button class="ib on" aria-label="无对齐"><svg><use href="#i-noalign"/></svg></button><button class="ib" aria-label="左"><svg><use href="#i-left"/></svg></button><button class="ib" aria-label="中"><svg><use href="#i-center"/></svg></button><button class="ib" aria-label="右"><svg><use href="#i-right"/></svg></button><button class="ib" aria-label="两端对齐"><svg><use href="#i-just"/></svg></button><button class="ib" aria-label="强制两端对齐"><svg><use href="#i-full-just"/></svg></button><i class="sq last"></i></div>
              <div class="row lines"><svg class="lead"><use href="#i-line"/></svg><div class="spin half hot"><input type="text" value="213.0 %" aria-label="行间距"><span><button aria-label="增加"><svg><use href="#i-up"/></svg></button><button aria-label="减少"><svg><use href="#i-down"/></svg></button></span></div><i class="sq"></i><div class="sel unit"><select aria-label="行间距单位"><option>%字符高度</option></select><svg><use href="#i-down"/></svg></div><i class="sq"></i></div>
              <div class="row off"><svg class="lead"><use href="#i-lind"/></svg><div class="spin half"><input type="text" disabled aria-label="左行缩进"><span><button disabled aria-label="增加"><svg><use href="#i-up"/></svg></button><button disabled aria-label="减少"><svg><use href="#i-down"/></svg></button></span></div><i class="sq"></i><svg class="lead"><use href="#i-rind"/></svg><div class="spin rest"><input type="text" disabled aria-label="右行缩进"><span><button disabled aria-label="增加"><svg><use href="#i-up"/></svg></button><button disabled aria-label="减少"><svg><use href="#i-down"/></svg></button></span></div><i class="sq"></i></div>
              <div class="row off"><svg class="lead"><use href="#i-find"/></svg><div class="spin half"><input type="text" disabled aria-label="首行缩进"><span><button disabled aria-label="增加"><svg><use href="#i-up"/></svg></button><button disabled aria-label="减少"><svg><use href="#i-down"/></svg></button></span></div><i class="sq"></i><svg class="lead"><use href="#i-after"/></svg><div class="spin rest"><input type="text" disabled aria-label="段后间距"><span><button disabled aria-label="增加"><svg><use href="#i-up"/></svg></button><button disabled aria-label="减少"><svg><use href="#i-down"/></svg></button></span></div><i class="sq"></i></div>
              <div class="row off"><svg class="lead"><use href="#i-rind"/></svg><div class="spin half"><input type="text" disabled aria-label="段前间距"><span><button disabled aria-label="增加"><svg><use href="#i-up"/></svg></button><button disabled aria-label="减少"><svg><use href="#i-down"/></svg></button></span></div><i class="sq"></i></div>
              <button class="expand" aria-label="展开"><svg><use href="#i-down"/></svg></button>
              <div class="tip" role="tooltip"><strong>行间距</strong><span>调整文本的行间距.</span></div>
              <svg class="cursor" width="13" height="20" viewBox="0 0 13 20"><path d="M.7 1v15l3.500-3.300L6.500 18.500l2.500-1-2.300-5.500H12z" fill="#fff" stroke="#222"/></svg>
              <svg class="arrow" width="140" height="66" viewBox="0 0 140 66"><g filter="url(#soft)"><path d="M3 57.500L111 12l-3-6 26-3-17 19-3-6L4 59.500z" fill="#555" opacity=".6" transform="translate(3 4)"/></g><path d="M3 57.500L111 12l-3-6 26-3-17 19-3-6L4 59.500z" fill="#f0100c"/><defs><filter id="soft"><feGaussianBlur stdDeviation="1.500"/></filter></defs></svg>
            </section>
            <section class="frame">
              <header><svg class="tri"><use href="#i-up"/></svg><h3>图文框</h3><i class="sq"></i></header>
              <div class="row"><svg class="lead"><use href="#i-frameA"/></svg><button class="swatch flush" aria-label="图文框填充"><span><svg><use href="#i-none"/></svg></span><svg><use href="#i-down"/></svg></button><i class="sq"></i><button class="ic f1" aria-label="基线网格"><svg><use href="#i-base"/></svg></button><i class="sq"></i><button class="ic f1 off more" aria-label="垂直对齐"><svg><use href="#i-valign"/></svg></button><i class="sq"></i></div>
              <div class="row off"><svg class="lead"><use href="#i-cols"/></svg><div class="spin cols"><input type="text" disabled value="1" aria-label="栏数"><span><button disabled aria-label="增加"><svg><use href="#i-up"/></svg></button><button disabled aria-label="减少"><svg><use href="#i-down"/></svg></button></span></div><i class="sq"></i><button class="ic f1" aria-label="等宽栏"><svg><use href="#i-cols2"/></svg></button><i class="sq"></i><button class="ic last" aria-label="栏设置"><svg class="dots"><use href="#i-dots"/></svg></button><i class="sq"></i></div>
            </section>
            <div class="dir"><span>文本方向：</span><button class="ib on" aria-label="横排"><svg><use href="#i-horz"/></svg></button><button class="ib" aria-label="竖排"><svg><use href="#i-vert"/></svg></button></div>
          </div>
          <div class="dbar"><svg width="8" height="6"><use href="#i-chev-up"/></svg></div>
        </div>
      </div>
      <div class="dtabs"><button class="vtab"><svg><use href="#i-agear"/></svg><span>文本</span></button><button class="add" aria-label="添加"><svg><use href="#i-plus"/></svg></button></div>
    </div>
  </aside>

  <div class="palette">
    <i class="grip"></i>
    <svg width="4" height="8" class="dark"><use href="#i-tri-r"/></svg>
    <svg width="12" height="14" viewBox="0 0 16 16"><path d="M1 15l1-3 8-8 2 2-8 8z" fill="none" stroke="currentColor"/><path d="M9 3l2 0 2-3 3 1v2l-3 2v2z" fill="currentColor"/></svg>
    <svg width="10" height="7"><use href="#i-chev-up"/></svg>
    <ul>
      <li><svg width="12" height="12" viewBox="0 0 12 12"><path d="M0 12L12 0" stroke="#f03030"/></svg></li>
      <li style="background:#231815"></li><li style="background:#3e3a39"></li><li style="background:#595757"></li><li style="background:#727171"></li><li style="background:#898989"></li><li style="background:#9fa0a0"></li><li style="background:#b5b5b6"></li><li style="background:#c9caca"></li><li style="background:#dcdddd"></li><li style="background:#f3f2f3"></li><li style="background:#ffffff"></li><li style="background:#1d2088"></li><li class="cur" style="background:#00a0e9"></li><li style="background:#009944"></li><li style="background:#fff100"></li><li style="background:#e60012"></li><li style="background:#e4007f"></li><li style="background:#ae4084"></li><li style="background:#f08300"></li><li style="background:#f4b1b1"></li><li style="background:#87746a"></li><li style="background:#cfcbe6"></li><li style="background:#a79bcd"></li><li style="background:#738fcb"></li><li style="background:#7b6cb0"></li><li style="background:#9085b0"></li><li style="background:#4f6795"></li><li style="background:#5a5272"></li><li style="background:#7689a3"></li><li style="background:#0090dd"></li><li style="background:#9fdaf8"></li><li style="background:#b5ccda"></li><li style="background:#95a9b2"></li><li style="background:#717f88"></li><li style="background:#49525a"></li><li style="background:#557572"></li><li style="background:#43907c"></li><li style="background:#719a98"></li><li style="background:#54ab97"></li><li style="background:#59a772"></li><li style="background:#5bc3d0"></li><li style="background:#4daab5"></li><li style="background:#b8cabb"></li><li style="background:#d6ebd8"></li><li style="background:#a3d5ad"></li>
    </ul>
    <svg width="10" height="7"><use href="#i-chev-dn"/></svg>
    <svg width="8" height="8"><use href="#i-dbl"/></svg>
  </div>
</main>

<footer class="status">
  <button class="ib more" aria-label="选项"><svg><use href="#i-gear"/></svg></button>
  <span class="hint">单击并拖动可添加段落文本</span>
  <span>美术字： 华文宋体 (常规) (CHC) 于 图层 1</span>
  <div class="fill"><svg width="16" height="16"><use href="#i-bucket"/></svg><i class="chip"></i><span>C:</span><span class="v">0</span><span>M:</span><span class="v">0</span><span>Y:</span><span class="v">0</span><span>K:</span><span class="v3">100</span></div>
  <div class="outline"><svg width="16" height="16"><use href="#i-pen"/></svg><i class="chip none"><svg width="20" height="20" viewBox="0 0 20 20"><path d="M0 20L20 0" stroke="#c00" stroke-width="1.500"/></svg></i><span>无</span></div>
  <svg class="proof" width="16" height="16" viewBox="0 0 16 16"><path d="M.5.500h15v12H.5z" fill="#fff" stroke="#333"/><path d="M2 2h12v4H2z" fill="#f00"/><path d="M2 6h12v5H2z" fill="#00a0ff"/><circle cx="8" cy="6" r="2.500" fill="#ccc" stroke="#333"/><path d="M2 15.500h12" stroke="#333"/></svg>
</footer>

<div class="mark">
  <svg width="46" height="44" viewBox="0 0 46 44"><defs><linearGradient id="mg" x1="0" y1="0" x2="1" y2="1"><stop offset="0" stop-color="#4a86d8"/><stop offset=".5" stop-color="#58b8e8"/><stop offset="1" stop-color="#5a90d0"/></linearGradient><linearGradient id="mh" x1="0" y1="1" x2="1" y2="0"><stop offset="0" stop-color="#e8e850"/><stop offset=".6" stop-color="#50b870"/></linearGradient></defs><path d="M45 3C24-2 2 12 2 25c0 5 3 9 8 9C6 22 18 10 45 3z" fill="url(#mg)"/><path d="M26 18c10-4 18-1 16 8C39 36 22 43 6 41c12-2 24-8 27-16 1-5-3-7-7-7z" fill="url(#mh)"/><path d="M34 13c-13-1-22 7-22 14 0 7 11 6 16 0 2-4-2-8-7-5 3 0 4 3 1 4-3 2-5 0-4-3 2-5 9-8 16-10z" fill="url(#mg)"/></svg>
  <div><strong>极光下载站</strong><span>www.xz7.com</span></div>
</div>
</body>
</html>
```

FILE: styles.css
```css
* { box-sizing: border-box; }
body {
  margin: 0;
  height: 100vh;
  display: flex;
  flex-direction: column;
  overflow: hidden;
  position: relative;
  background: #f3f3f3;
  color: #000;
  font: 13px/16px "Noto Sans CJK SC", sans-serif;
}
button, input, select { font: inherit; color: inherit; margin: 0; padding: 0; border: 0; background: none; border-radius: 0; }
button { display: flex; align-items: center; justify-content: center; white-space: nowrap; }
input { min-width: 0; font-size: 11px; outline: 0; }
h1, h2, h3, p, ul { margin: 0; padding: 0; font-size: 13px; font-weight: 400; }
svg { display: block; flex: none; }
.defs { position: absolute; width: 0; height: 0; }
.off { color: #b4b4b4; }

/* title and menu */
.titlebar { height: 21px; flex: none; display: flex; align-items: center; background: #fff; padding-left: 3px; }
.logo { width: 16px; height: 16px; margin-right: 5px; }
.titlebar h1 { font-size: 12px; line-height: 18px; padding-bottom: 2px; }
.winbtns { margin-left: auto; display: flex; padding-right: 5px; gap: 21px; align-items: center; }
.winbtns .close { margin-left: -5px; }
.menubar { height: 22px; flex: none; display: flex; background: #d7d7d7; }
.menubar button { padding: 0 12px 2px; }
.menubar button:first-child { padding-left: 10px; }
.menubar span, .txt span { font-size: 11px; }

/* toolbars */
.toolbar { display: flex; align-items: center; flex: none; padding-left: 1px; border-bottom: 1px solid #d2d2d2; overflow: hidden; }
.std { height: 32px; }
.prop { height: 43px; padding-left: 2px; }
.sep { width: 8px; height: 32px; flex: none; align-self: center; background: linear-gradient(#d2d2d2, #d2d2d2) center / 1px 100% no-repeat; }
.prop .sep { height: 38px; }
.prop .far { margin-left: 2px; }
.ib { width: 29px; height: 24px; flex: none; position: relative; color: #333; }
.ib > svg { width: 16px; height: 16px; }
.ib.off { color: #b4b4b4; }
.ib.wide { width: 33px; }
.ib.mid { width: 31px; }
.ib.on { width: 25px; margin: 0 2px; background: #fff; border: 1px solid #adadad; }
.more { position: relative; }
.more::after { content: ""; position: absolute; right: 5px; bottom: 0; border-left: 4px solid transparent; border-bottom: 4px solid #777; }
.more.off::after { border-bottom-color: #b4b4b4; }
.drop { width: 16px; height: 24px; flex: none; color: #777; justify-content: flex-start; padding-left: 2px; }
.drop.off { color: #c8c8c8; }
.drop svg, .txt svg, .combo button svg, .sel > svg { width: 8px; height: 4px; }
.txt { height: 24px; padding-bottom: 1px; }
.txt svg { color: #777; margin-left: 12px; }
.snap { padding: 0 5px 1px 8px; }
.launch svg { margin-left: 17px; }
.pdf { flex-direction: column; font: 9px/9px "Noto Sans CJK SC", sans-serif; }
.pdf > svg { width: 8px; height: 8px; }
.combo { display: flex; height: 24px; border: 1px solid #adadad; background: #fff; flex: none; }
.combo input { flex: 1; padding: 0 0 2px 4px; }
.combo button { width: 18px; border-left: 1px solid #adadad; background: #e8e8e8; color: #777; }
.zoomlevel { width: 86px; margin: 0 3px; }
.font { width: 171px; margin: 0 5px 0 4px; }
.font input { font-size: 13px; }
.size { width: 88px; margin-right: 2px; }
.anchor { width: 32px; }
.anchor svg { width: 24px; height: 24px; }
.pair { display: flex; flex-direction: column; width: 89px; }
.pair input { height: 17px; border: 1px solid #adadad; background: #fff; padding: 0 0 1px 3px; }
.pair input + input { border-top: 0; height: 16px; }
.labels { width: 27px; padding-left: 5px; font-size: 12px; }
.dims { width: 20px; align-items: center; gap: 3px; }
.dims .w { width: 13px; height: 8px; }
.dims .h { width: 8px; height: 13px; }
.pair.scale { width: 43px; margin-left: 5px; }
.pct { width: 16px; padding-left: 3px; font-size: 11px; }
.lock > svg { width: 12px; height: 14px; }
.lock { width: 24px; }
.rot { width: 24px; padding-left: 5px; }
.rot svg { width: 16px; height: 16px; }
.rotin { width: 50px; height: 24px; border: 1px solid #adadad; background: #fff; padding: 0 0 2px 3px; }
.deg { width: 8px; height: 10px; margin: 0 6px 6px 11px; }
.add svg, .ib.add > svg { width: 12px; height: 12px; color: #adadad; }
.custom { width: 40px; }

/* main area */
main { flex: 1; min-height: 0; display: flex; }
.toolbox { width: 32px; flex: none; border-right: 1px solid #d2d2d2; padding-top: 2px; display: flex; flex-direction: column; }
.toolbox hr { width: 22px; height: 1px; border: 0; background: #d2d2d2; margin: 4px auto 3px 5px; }
.tb { width: 32px; height: 29px; flex: none; color: #333; }
.tb svg { width: 16px; height: 16px; }
.tb.more::after { right: 4px; bottom: 4px; }
.tb.on { width: 24px; height: 24px; margin: 2px 0 3px 4px; padding-bottom: 1px; background: #fff; border: 1px solid #adadad; font-size: 16px; font-weight: 700; }
.tb.on.more::after { right: 0; bottom: 0; }
.tb.add { height: 38px; }

.doc { flex: 1; min-width: 0; display: flex; flex-direction: column; }
.tabs { height: 21px; flex: none; display: flex; background: #e9e9e9; border-bottom: 1px solid #00a2ff; }
.tabs button { background: #d7d7d7; padding: 0 28px 2px 1px; }
.tabs .home svg { width: 16px; height: 16px; margin: 2px 17px 0 0; color: #333; }
.tabs .active { background: #cce0ff; padding: 0 25px 2px 10px; }
.tabs .newtab { width: 22px; padding: 0; color: #adadad; }
.newtab svg { width: 10px; height: 10px; }
.hruler { height: 18px; flex: none; position: relative; border-bottom: 1px solid #d2d2d2; overflow: hidden; }
.hruler text, .vruler text { font-size: 10px; fill: #8c8c8c; }
.hruler span { position: absolute; right: 2px; top: 0; font-size: 10px; line-height: 13px; color: #888; background: #f3f3f3; }
.work { flex: 1; min-height: 0; display: flex; background: #fff; }
.vruler { width: 18px; flex: none; background: #f3f3f3; border-right: 1px solid #d2d2d2; overflow: hidden; }
.canvas { flex: 1; min-width: 0; display: flex; align-items: center; justify-content: center; padding: 3px 0 0 1px; }
.sheet { width: 458px; height: 646px; border: 1px solid #a6a6a6; box-shadow: 6px 4px 0 #bfbfbf; background: #fff; padding: 140px 0 0 74px; }
.art { display: flex; height: 26px; margin-bottom: 31px; align-items: center; }
.cjk { display: flex; width: 322px; height: 26px; background: #c5e5ff; border-radius: 5px; }
.art b { flex: 1; font: 300 22px/24px "Noto Sans CJK SC", sans-serif; color: #231815; }
.num { width: 12px; height: 26px; border-radius: 5px; background: #cfdbea; color: #231815; font: 22px/24px "Liberation Sans", sans-serif; text-align: center; }
.tail { width: 10px; height: 26px; border-radius: 5px; background: #c5e5ff; }
.vscroll { width: 16px; flex: none; display: flex; flex-direction: column; }
.vscroll button { height: 17px; background: #efefef; color: #555; }
.vscroll svg { width: 9px; height: 7px; }
.track { flex: 1; display: flex; flex-direction: column; padding: 172px 0 171px; }
.vscroll .thumb { flex: 1; background: #cdcdcd; width: 15px; }
.pagebar { height: 18px; flex: none; display: flex; border-bottom: 1px solid #d2d2d2; }
.vr-end { width: 18px; border-right: 1px solid #d2d2d2; flex: none; }
.pagenav { flex: 767; display: flex; align-items: center; border-top: 1px solid #808080; border-right: 1px solid #808080; color: #333; }
.pagenav button { width: 16px; height: 16px; }
.count { width: 45px; padding: 0 4px 1px; display: flex; justify-content: space-between; color: #aaa; }
.pagenav .pagetab { width: 48px; height: 17px; position: relative; margin-left: 7px; align-self: flex-start; margin-top: -1px; color: #000; }
.pagetab svg { position: absolute; inset: 0; width: 48px; height: 17px; }
.pagetab span { position: relative; font-size: 12px; padding-bottom: 2px; }
.grip { width: 6px; height: 12px; flex: none; background: radial-gradient(circle, #b0b0b0 1px, transparent 1px) 0 0 / 4px 4px; }
.pagenav .grip { margin-left: auto; margin-right: 2px; }
.hscroll { flex: 749; display: flex; }
.hscroll button { width: 17px; background: #efefef; color: #555; }
.hscroll svg { width: 7px; height: 9px; }
.hscroll .thumb { flex: 1; background: #cdcdcd; margin-bottom: 1px; }
.nav { width: 16px; background: #fff; }
.docpal { height: 20px; flex: none; display: flex; align-items: center; padding: 0 7px 0 2px; color: #777; }
.docpal button { width: 18px; height: 18px; }
.docpal .pickcol { width: 20px; color: #333; }
.docpal .nofill { border: 1px solid #444; background: #fff; }
.docpal em { flex: 1; text-align: center; color: #adadad; padding: 0 0 2px 16px; }

/* text docker */
.docker { width: 318px; flex: none; border-left: 2px solid #fff; padding-left: 3px; background: linear-gradient(90deg, #d2d2d2 1px, #f3f3f3 1px); display: flex; flex-direction: column; }
.dtitle { height: 23px; flex: none; display: flex; align-items: center; background: #e9e9e9; border-bottom: 1px solid #adadad; padding: 0 8px 0 6px; gap: 10px; }
.dtitle h2 { margin-right: auto; padding-bottom: 2px; }
.dbody { flex: 1; min-height: 0; display: flex; }
.dleft { flex: 1; display: flex; flex-direction: column; border-right: 1px solid #00a2ff; }
.dtools { height: 27px; flex: none; display: flex; align-items: center; background: #e9e9e9; }
.dtools .ib { width: 26px; }
.dtools .ib.on { margin: 0 1px; width: 24px; }
.dtools .ib.last { margin-left: auto; width: 20px; }
.dtools .sep { height: 22px; }
.dscroll { flex: 1; min-height: 0; display: flex; }
.dform { flex: 1; }
.dbar { width: 17px; flex: none; border-left: 2px solid #fff; background: #efefef; color: #aaa; padding: 5px 0 0 3px; }
.dtabs { width: 21px; flex: none; background: #e9e9e9; border-right: 1px solid #d2d2d2; }
.vtab { width: 20px; height: 73px; flex-direction: column; justify-content: flex-start; background: #cce0ff; padding-top: 3px; gap: 7px; color: #333; }
.vtab svg { width: 16px; height: 16px; }
.vtab span { writing-mode: vertical-rl; text-orientation: sideways; color: #000; line-height: 20px; }
.dtabs .add { width: 20px; height: 24px; }
.dform section { position: relative; border-bottom: 2px solid #e8e8e8; }
.dform header { height: 23px; display: flex; align-items: center; padding-left: 9px; color: #777; }
.tri, .spin button svg { width: 8px; height: 4px; }
.dform h3 { margin: 0 auto 0 10px; padding-bottom: 3px; font-weight: 700; font-size: 14px; line-height: 20px; color: #000; }
.cog { color: #333; width: 24px; margin-right: -2px; }
.cog svg { width: 9px; height: 9px; }
.row { display: flex; align-items: center; height: 24px; margin: 0 0 5px 3px; }
.row.gap { margin-bottom: 13px; }
.sq { width: 20px; height: 24px; flex: none; background: linear-gradient(#fff, #fff) center / 5px 5px no-repeat, linear-gradient(#d6d6d6, #d6d6d6) center / 7px 7px no-repeat; }
.full, .main { margin-right: 1px; }
.full { width: 165px; }
.main { width: 145px; }
.combo input.picked { font-size: 13px; color: #fff; background: linear-gradient(#0078d7, #0078d7) 3px 3px / 53px 16px no-repeat; }
.combo input.picked.one { background-size: 14px 16px; }
.spin { display: flex; height: 24px; border: 1px solid #adadad; background: #fff; flex: none; }
.spin input { flex: 1; padding: 0 0 2px 3px; }
.spin > span { width: 18px; display: flex; flex-direction: column; border-left: 1px solid #adadad; background: #efefef; color: #777; }
.spin button { height: 11px; }
.spin button svg { width: 6px; height: 3px; }
.pt { width: 65px; }
.half { width: 97px; }
.unit { width: 114px; }
.rest { width: 95px; }
.cols { width: 53px; }
.off .spin { border-color: #d0d0d0; background: #f3f3f3; }
.off .spin > span { border-color: #d0d0d0; background: #f3f3f3; color: #c4c4c4; }
.off .lead { color: #b4b4b4; }
.sel { position: relative; height: 24px; flex: none; }
.sel select { appearance: none; width: 100%; height: 24px; border: 1px solid #adadad; background: #e8e8e8; padding: 0 0 2px 4px; }
.sel > svg { position: absolute; right: 4px; top: 10px; color: #777; pointer-events: none; }
.sel.off select { border-color: #cfcfcf; background: #f3f3f3; opacity: 1; color: #b8b8b8; }
.sel.off > svg { color: #c4c4c4; }
.lead { width: 16px; height: 16px; margin-right: 4px; color: #333; }
.rest { margin-left: -1px; }
.ic { width: 24px; height: 24px; color: #333; }
.ic svg { width: 16px; height: 16px; }
.ic svg.dots { height: 4px; }
.ic.more::after { right: 1px; }
.ic.off, .off .ic { color: #b4b4b4; }
.last { margin-left: auto; }
.swatch { width: 52px; height: 24px; border: 1px solid #adadad; background: #fff; margin-left: 4px; align-items: stretch; }
.swatch.flush { margin-left: 0; width: 53px; }
.swatch span { flex: 1; margin: 3px; display: flex; align-items: center; justify-content: center; }
.swatch span svg { width: 18px; height: 12px; }
.swatch > svg { width: 18px; height: 22px; padding: 9px 5px; border-left: 1px solid #adadad; background: #e8e8e8; color: #777; }
.brown { background: #231815; }
.black { background: #000; }
.expand { width: 100%; height: 18px; background: #e9e9e9; color: #777; margin: 7px 0 6px; }
.expand.first { margin-top: 15px; }
.expand svg { width: 8px; height: 4px; }
.chars header { margin-bottom: 6px; }
.aligns { margin-bottom: 13px; }
.aligns .ib.on { width: 24px; margin: 0 3px 0 1px; }
.para header, .frame header { margin-bottom: 5px; }
.row.lines { margin-bottom: 13px; }
.hot, .hot > span { border-color: #00a2ff; }
.hot button:first-child { background: #cce0ff; border-bottom: 1px solid #00a2ff; }
.hot input { background: #f3f3f3; margin: 3px 2px 3px 0; }
.tip { position: absolute; left: 123px; top: 92px; width: 120px; height: 42px; border: 1px solid #4a4a4a; background: #fff; box-shadow: 3px 3px 3px #888; color: #555; padding: 3px 5px; display: flex; flex-direction: column; }
.tip strong { font-weight: 500; }
.cursor { position: absolute; left: 113px; top: 72px; }
.arrow { position: absolute; left: -132px; top: 87px; }
.f1 { margin-left: 16px; }
.dform .frame { border-bottom: 0; }
.frame::after { content: ""; display: block; height: 1px; background: #cfcfcf; margin: 17px 2px 0; }
.dir { display: flex; align-items: center; margin-top: 14px; padding-left: 1px; }
.dir span { width: 80px; padding-bottom: 2px; }

/* colour palette */
.palette { width: 20px; flex: none; display: flex; flex-direction: column; align-items: center; color: #b4b4b4; overflow: hidden; }
.palette .grip { width: 16px; height: 6px; margin-top: 2px; }
.palette > svg { margin-top: 5px; }
.palette .dark { color: #666; }
.palette ul { flex: 1; min-height: 0; overflow: hidden; list-style: none; width: 18px; margin-top: 11px; border: 1px solid #555; border-bottom: 0; }
.palette li { height: 17px; border-bottom: 1px solid #555; display: flex; justify-content: center; align-items: center; background: #fff; }
.palette li.cur { box-shadow: 0 0 0 1px #fff; border-color: #fff; }
.palette ul + svg { margin-top: 4px; }
.palette ul ~ svg:last-child { margin: 10px 0 12px; }

/* status bar */
.status { height: 29px; flex: none; display: flex; align-items: center; border-top: 1px solid #d2d2d2; padding: 8px 10px 0 4px; position: relative; }
.status .ib { margin-right: 3px; }
.status span { padding-bottom: 1px; }
.status .hint { margin-right: 29px; }
.fill { margin-left: auto; display: flex; align-items: center; margin-right: 16px; }
.chip { width: 22px; height: 22px; border: 1px solid #adadad; background: #231815; margin: 0 5px 0 2px; }
.chip.none { background: #fff; margin-left: 0; }
.fill span { font-size: 12px; }
.fill .v { width: 21px; text-align: right; margin-right: 2px; }
.fill .v3 { width: 27px; text-align: right; }
.outline { display: flex; align-items: center; margin-right: 204px; }
.proof { position: relative; z-index: 2; }

.mark { position: absolute; right: 11px; bottom: 5px; display: flex; opacity: .8; }
.mark div { display: flex; flex-direction: column; }
.mark strong { font: 700 21px/26px "Noto Sans CJK SC", sans-serif; color: #4a90d8; }
.mark span { font: 700 16px/18px "Liberation Sans", sans-serif; color: #54b87c; }
```
